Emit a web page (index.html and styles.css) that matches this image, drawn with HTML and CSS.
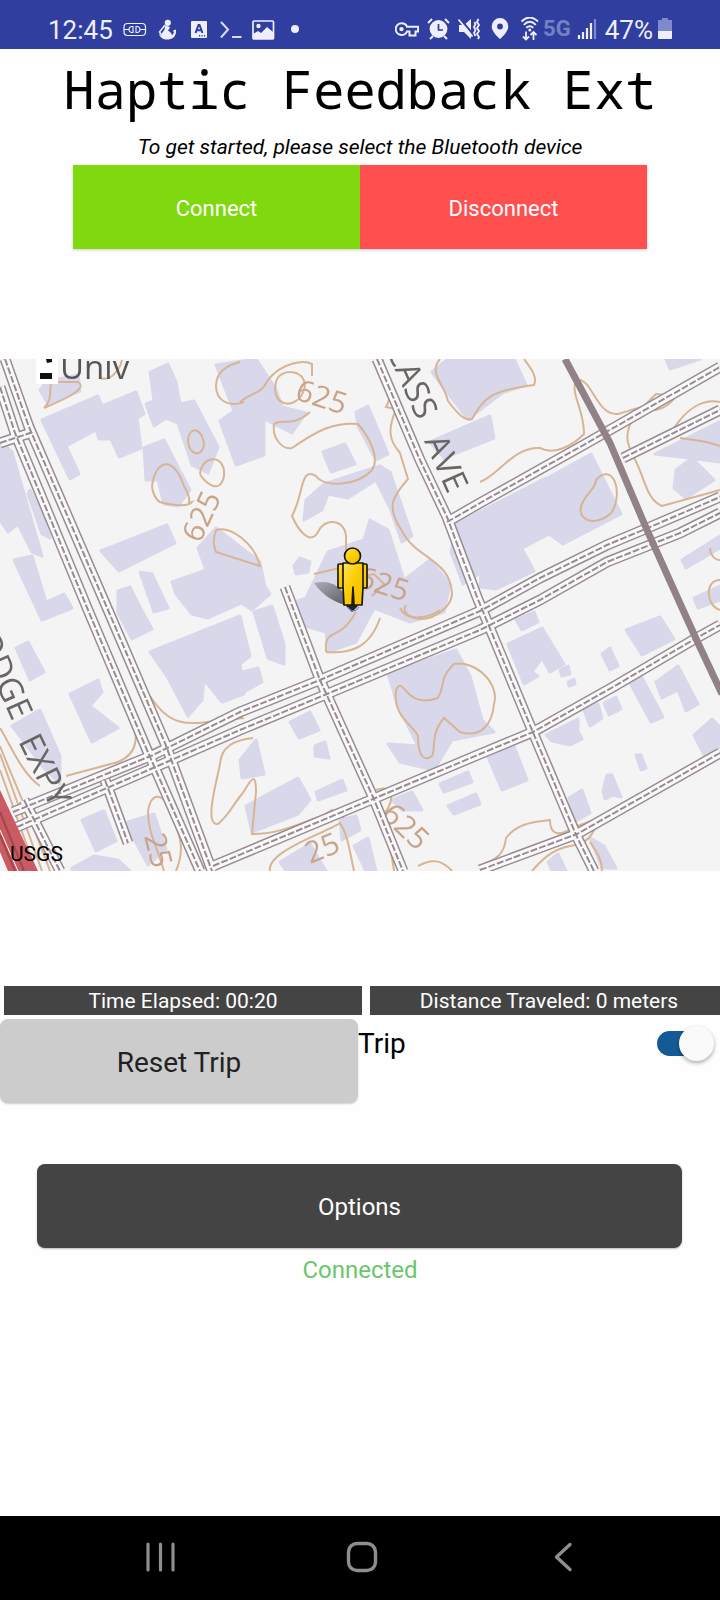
FILE: index.html
```html
<!DOCTYPE html>
<html lang="en">
<head>
<meta charset="utf-8">
<meta name="viewport" content="width=device-width, initial-scale=1">
<title>Haptic Feedback Ext</title>
<link rel="stylesheet" href="styles.css">
</head>
<body>
<div class="screen">
  <header class="status">
    <div class="status-left">
      <span class="clock time">12:45</span>
      <svg class="ico" viewBox="0 0 24 24"><rect x="1" y="6.500" width="21.500" height="12" rx="3.500" fill="none" stroke="#eef" stroke-width="1.200"/><path d="M1 12.500h5M17 12.500h5M10 9.500H8.500Q6 10 6 12.500T8.500 15.500H10ZM13 9.500h1.500Q17 10 17 12.500T14.500 15.500H13Z" fill="none" stroke="#eef" stroke-width="1.100"/></svg>
      <svg class="ico" viewBox="0 0 24 24"><circle cx="12.800" cy="5.800" r="3.100" fill="#eef"/><path d="M10 8 4.500 15l3 4" fill="none" stroke="#eef" stroke-width="1.500"/><path d="M10 8.500c2 .5 4 1 5 2l-2 3c2 1 4 3 4 5l2-3-1-2 3-1v3c-1 5-4 7-9 7-4 0-7-2-8-6l3 3c-1-2 0-4 2-6 1-2 1-3 1-5Z" fill="#eef"/></svg>
      <svg class="ico" viewBox="0 0 24 24"><rect x="4" y="4" width="16" height="17" rx="1" fill="#eef"/><path d="m8.500 16 3-8h1l3 8M9.700 13.200h4.600" fill="none" stroke="#303f9f" stroke-width="2"/><path d="M12 18.800h1.200m1.300 0h1.200m1.300 0h1.200" stroke="#303f9f" stroke-width="1.400"/></svg>
      <svg class="ico" viewBox="0 0 24 24"><path d="m2 5 7 7.500L2 20.500" fill="none" stroke="#d9dcf0" stroke-width="2"/><path d="M13 20h9.500" stroke="#d9dcf0" stroke-width="2"/></svg>
      <svg class="ico" viewBox="0 0 24 24"><rect x="2" y="4" width="20.500" height="18" rx="1" fill="none" stroke="#eef" stroke-width="1.700"/><circle cx="7.500" cy="9" r="2.200" fill="#eef"/><path d="M2 17l5-3 3 2 6-6 6 5v7H2Z" fill="#eef"/></svg>
      <svg class="ico" viewBox="0 0 24 24"><circle cx="12" cy="12" r="4" fill="#eef"/></svg>
    </div>
    <div class="status-right">
      <div class="status-set">
        <svg class="ico" viewBox="0 0 24 24"><path d="M6.500 6.200a5.900 5.900 0 1 0 5.600 8.200h2.400v4.200h6v-4.200h2.600V9.800H12.100A5.900 5.900 0 0 0 6.500 6.200Z" fill="none" stroke="#eef" stroke-width="2"/><circle cx="6.500" cy="12.100" r="2.200" fill="#eef"/></svg>
        <svg class="ico" viewBox="0 0 24 24"><circle cx="12.500" cy="12" r="7.900" fill="#eef" stroke="#eef" stroke-width="2"/><path d="M12.500 7v6h4.500" fill="none" stroke="#303f9f" stroke-width="1.700"/><path d="m2 6 4-4M23 6l-4-4M7 19l-3 3M18 19l3 3" stroke="#eef" stroke-width="2"/></svg>
        <svg class="ico" viewBox="0 0 24 24"><path d="M2 8h5l7-6v20l-7-7H2Z" fill="#eef"/><path d="m3 1.500 13 16" stroke="#303f9f" stroke-width="2"/><path d="m1.500 2.500 14 17" stroke="#eef" stroke-width="1.800"/><path d="m17.500 5 1 2-1.500 3 1.500 3-1.500 3 1.500 3M21.500 2 20 5l2 3-2 3 2 3-2 3 2 3-1 2" fill="none" stroke="#eef" stroke-width="1.800"/></svg>
        <svg class="ico" viewBox="0 0 24 24"><path fill-rule="evenodd" d="M12 1a8.300 8.300 0 0 0-8.300 8.400C3.700 15 12 22 12 22s8.300-7 8.300-12.600A8.300 8.300 0 0 0 12 1Zm0 5.600a2.900 2.900 0 1 1 0 5.800 2.900 2.900 0 0 1 0-5.800Z" fill="#eef"/></svg>
        <svg class="ico" viewBox="0 0 24 24"><path d="M2.500 4.500Q10.500-3.500 19 4.500M4.800 7.800q6-6 12 0M7.300 10.800q3.500-3.300 7 0" fill="none" stroke="#eef" stroke-width="1.900"/><circle cx="10.800" cy="13" r="1.500" fill="#eef"/><path d="M7 14.500v8M4 19.500l3 3 3-3M14.500 23v-8M11.500 18l3-3 3 3" fill="none" stroke="#eef" stroke-width="1.800"/></svg>
      </div>
      <span class="net">5G</span>
      <svg class="ico" viewBox="0 0 24 24"><path d="M3 22v-4M7 22v-7M11 22V11M15 22V6" stroke="#eef" stroke-width="2.200"/><path d="M19 22V2" stroke="#8089cb" stroke-width="2.200"/></svg>
      <span class="clock">47%</span>
      <svg class="battery" viewBox="0 0 14 24"><path d="M4 1h6v2h4v11H0V3h4Z" fill="#8089cb"/><path d="M0 14h14v7q0 1-1 1H1q-1 0-1-1Z" fill="#eef"/></svg>
    </div>
  </header>

  <main class="content">
    <h1 class="title">Haptic Feedback Ext</h1>
    <p class="hint">To get started, please select the Bluetooth device</p>
    <div class="pair">
      <button class="btn connect" type="button">Connect</button>
      <button class="btn disconnect" type="button">Disconnect</button>
    </div>

    <div class="map">
      <svg class="map-art" viewBox="0 359 720 512" preserveAspectRatio="xMidYMid slice" role="img" aria-label="Map with your position">
        <defs>
          <linearGradient id="gold" x1="0" y1="0" x2="1" y2="1"><stop offset="0" stop-color="#ffe45c"/><stop offset=".5" stop-color="#fccb00"/><stop offset="1" stop-color="#f2bd00"/></linearGradient>
          <linearGradient id="shade" x1="0" y1="0" x2="1" y2="1"><stop offset="0" stop-color="#444" stop-opacity=".3"/><stop offset="1" stop-color="#333" stop-opacity=".85"/></linearGradient>
        </defs>
        <rect y="359" width="720" height="512" fill="#f5f4f5"/>
        <g class="soft">
          <g class="buildings">
            <path d="M42 420 98 396l4 10 34-14 8 22-7 4 4 30-22 9-8-18-12 0-3-9-30 16 13 28-9 5Z"/>
            <path d="M40 390l6-8 32-7 2 16-32 13Z"/>
            <path d="M150 372l18-8 8 18 4 22 14-3 24 46-10 26-16-8-14-42-12-5-12 8-8-22 8-3Z"/>
            <path d="M144 448l20-8 26 50-12 16-14-2-6-24-12 0Z"/>
            <path d="M216 365l40-6 20 30 6 18 24 6-14 20-28-14 0 36-28 10-16-44 14-10Z"/>
            <path d="M0 440 12 452 42 556 32 552 18 524 8 532 0 520Z"/>
            <path d="M30 490l14 30 6 18-8-4-14-40Z"/>
            <path d="M101 551 167 525l8 18-56 28Z"/>
            <path d="M14 560l18-4 14 46 18-8 8 14-30 12Z"/>
            <path d="M118 591l12-4 10 20 12 22-20 10-14-26Z"/>
            <path d="M140 572l12 2 16 34-14 4Z"/>
            <path d="M172 582 206 570l-8-22 18-20 44 34 6 30-58 26-16-4-16-20Z"/>
            <path d="M150 652 240 616l10 40-10 8 4 30-22 8-18-22-2 20-14 16-20-38Z"/>
            <path d="M16 648l12-6 16 30-14 8Z"/>
            <path d="M70 694l28-14 4 12-12 14 28 22-26 14Z"/>
            <path d="M12 726l28-16 20 46 0 28-16-16Z"/>
            <path d="M82 820l22-9 12 30-20 10Z"/>
            <path d="M72 868l22-12 24 4 12 11H72Z"/>
            <path d="M128 822l26-8 12 35-18 16-14-26Z"/>
            <path d="M356 412l12-6 20 48-12 6-18-34Z"/>
            <path d="M323 452l22-8 10 20-24 8Z"/>
            <path d="M306 500l18-16 56-18 10 6 22 64-10 6-12-34-14-28-28 18-20-4-6 16-18 10Z"/>
            <path d="M328 552l36-12 6-20 18 10 16 50 26-20 20 24-6 28-34 10-36-14-18 34-28 10-2-20-28-8-8-20 16-6Z"/>
            <path d="M294 566l6-8 10 4-2 10-12 2Z"/>
            <path d="M240 590l18-14 12 18-18 16-12-8Z"/>
            <path d="M254 612l18-6 12 38 0 20-16-6Z"/>
            <path d="M242 672l16-4 4 14-22 12Z"/>
            <path d="M432 372 448 359h66l12 26-24 8-34 26-28-36Z"/>
            <path d="M430 442l60-26 4 22-50 20Z"/>
            <path d="M456 524l88-45 9-3 12 32-14-32 40-22 30 60-58 30-14-10-38 20-48 30-12-32Z"/>
            <path d="M482 559l38-14 14 26-38 18-16-2Z"/>
            <path d="M666 359h34l-30 10ZM655 454l64-32v40l-30-4ZM676 470l16-12 22 22-28 18-12-10Z"/>
            <path d="M682 560l38-24v12l-34 20ZM694 598l26-12v14l-22 8Z"/>
            <path d="M388 674l68-24 14 26 12 44 12 12-42 8-18 30-34-8-12-18 30 2-20-40Z"/>
            <path d="M508 644l34-16 22 36-14 8-8-14-10 14 6 4-14 8Z"/>
            <path d="M516 620l18-8 4 10-16 8Z"/>
            <path d="M626 630l34-13 14 22-32 16Z"/>
            <path d="M602 654l8-6 8 18-8 4ZM560 670l8-4 2 8-8 2ZM568 682l6-3 1 5-6 2Z"/>
            <path d="M629 681l12-5 22 41-12 5ZM656 682l22-16 20 38-12 7-8-21-16 8Z"/>
            <path d="M546 735l32-16 0 12 4 8-12 6-18-4ZM584 710l14-6 4 14-12 8ZM604 703l12-6 5 12-12 6Z"/>
            <path d="M488 757l26-11 13 34-25 10ZM569 798l13-8 8 23-14 8ZM636 755l5 0 5 13-5 2ZM607 775l5 0 9 22-8-2-8 4-2-8Z"/>
            <path d="M694 735l18-16 8 8v20l-16 8Z"/>
            <path d="M290 722l20-10 9 18-20 8ZM315 746l10-4 4 16-14-2ZM316 792l26-12 4 10-28 10Z"/>
            <path d="M240 760l16-20 8 34-22 4Z"/>
            <path d="M246 806l52-28 12 22-12 14-46 18Z"/>
            <path d="M340 820l16-4 4 14-18 10ZM354 846l14-8 8 33h-10ZM280 862l30-18 16 27h-40Z"/>
            <path d="M440 784l28-12 4 10-28 10ZM448 806l28-12 4 10-26 10ZM392 800l20-8 10 18-20 0Z"/>
            <path d="M548 862l10-8 8 17h-14ZM590 838l14 8 12 22h-14Z"/>
          </g>
          <g class="contours">
            <path d="M44 408c10-10 4-20 8-26l26 0c10 6-10 16-34 26M100 378c10 4 20-8 22-18"/>
            <path d="M240 402c14-12 20-6 28-22 14-18 36-20 44-16l0 12M240 362c-16 4-24 12-24 24 0 14 12 22 28 16"/>
            <path d="M276 382c-6 24 20 30 28 8 6-20-24-24-28-8"/>
            <path d="M310 412c-18 16-28 6-36 12-2 14 8 26 18 24 26-18 42-26 66-24 12 14 22 34 14 46-14 16-48 18-56 6-16-10-12 18-24 40 6 14 18 30 26 16 6-14 26-14 28 4v14"/>
            <path d="M382 359c6 16 14 30 4 48l10 2c-8 20-8 30 4 44l8 26c-16 18-22 28-6 52 14 28 48 28 50 62 0 10-8 18-20 24-18 6-32-4-26-12"/>
            <path d="M440 359c-12 14 4 24 8 42 12 16 18 20 24 18 12-20 16-28 62-34 4-8-4-18-10-26"/>
            <path d="M480 482c18-6 34-36 60-34 16 8 34-4 44-14 0-26-14-40-8-54 16-4 20 36 42 34 16-4 24-10 38-4 10-2 16-8 20-14l-20-2-20 20"/>
            <path d="M720 402c-18-4-34 8-46 26M632 420c-10 20-2 28 6 46 8 18 10 34 24 40l58-16M680 438c14 2 24 2 40 8"/>
            <path d="M584 500c-12 18 10 30 28 12 12-22 0-50-16-32 0 8-8 12-12 20"/>
            <path d="M152 486c4-28 22-30 32 0 12 20-2 20 8 16-4 6-26 2-32 0-4-2-8-10-8-16M188 442c0-18 16-14 16 4-4 12-14 8-16-4"/>
            <path d="M200 474c2-20 26-20 24 2-4 20-20 6-24-2"/>
            <path d="M216 530c-4 12-2 16 0 22l44 14c-6-24-30-40-44-36"/>
            <path d="M326 652c-2-26 12-8 30-40M326 652c24 2 44-4 54-34M400 608c8 16 32 8 40 2M314 574l26-6 4 12 30-6 10 10-12 12"/>
            <path d="M396 690c8-16 8 20 42 8 8-14 0-18 16-34 22-4 46 20 40 40-2 22-14 34-34 28l-16-14c-14 16-8 32-12 38-8 6-14 0-14-20-4-10-26-20-22-46"/>
            <path d="M132 712c4 20 10 40-14 50l-52 14M150 696c24 38 44 26 94 22M253 738c-18 2-32 8-33 26-4 20-16 62-2 60 12-10 14-18 24-30 6-8 14-28 14-2l-4 42c30 0 50-12 70-18l10-6 12 8"/>
            <path d="M148 812c2-20 16-22 24 4 10 22 12 36 4 55M148 812c0 20 8 32 16 59M270 871c-4-20 60-40 70-48 8 12 10 30 14 48"/>
            <path d="M376 790c20-8 20 16 2 30 8 16 14 30 16 51M418 866c14-8 24-6 34 5M480 866c12-6 24-8 26-28 12-16 30-16 44-18 0 16 10 16 22 8l28-10c-8 18-12 26-30 28-20 4-30 16-38 25M590 842c8 12 12 18 12 29"/>
            <path d="M720 560c-6 0-10-6-10-12M720 610c-14-4-16-30 0-30"/>
            <path d="M0 728c10 16 22 46 40 58M0 746c10 26 30 70 50 125M0 754l42 117M0 770l36 101"/>
          </g>
          <text class="elev" transform="translate(294 399) rotate(18)">625</text>
          <text class="elev" transform="translate(200 544) rotate(-65)">625</text>
          <text class="elev" transform="translate(356 586) rotate(18)">625</text>
          <text class="elev" transform="translate(380 816) rotate(44)">625</text>
          <text class="elev" transform="translate(144 836) rotate(76)">25</text>
          <text class="elev" transform="translate(310 864) rotate(-22)">25</text>
          <g class="rail-edge"><use href="#roads"/></g>
          <g class="rail-fill"><use href="#roads"/></g>
          <g class="rail-mid">
            <g id="roads">
              <path d="M0 387 15 433 88 610 147 750 200 871"/>
              <path d="M5 359 29 427 108 610 165 743 212 871"/>
              <path d="M0 443 33 432"/>
              <path d="M13 812 153 755 240 712 320 680 480 611 540 578 607 545 650 527 720 497"/>
              <path d="M17 827 160 765 240 730 327 694 480 630 540 600 607 562 680 533 720 513"/>
              <path d="M377 359 420 460 447 517 477 597 532 730 577 837 594 871"/>
              <path d="M285 587 320 680 373 797 403 871"/>
              <path d="M447 522 480 503 580 447 720 367"/>
              <path d="M623 458 720 410"/>
              <path d="M213 866 373 799 480 754 533 732 613 687 693 640 720 625"/>
              <path d="M480 870 577 834 720 753"/>
              <path d="M105 780 128 843M24 800 60 871"/>
            </g>
          </g>
          <path d="M565 359 610 443 647 530 683 610 698 643 722 694" fill="none" stroke="#908285" stroke-width="7"/>
          <path d="M0 790 38 871H8L0 852Z" fill="#c95b62"/>
          <path d="M0 812 24 871M0 835 15 871" stroke="#a8444d" stroke-width="2"/>
          <path d="M0 830 18 871" stroke="#fff" stroke-width="1"/>
          <rect x="36" y="359" width="22" height="25" fill="#fff"/>
          <path d="M40 373h12v6H40ZM46 359h6v3l-5 1Z" fill="#111"/>
          <text class="place" x="60" y="379">Univ</text>
          <text class="street" transform="translate(386 350) rotate(66)">CASS</text>
          <text class="street" transform="translate(424 441) rotate(66)">AVE</text>
          <text class="street" transform="translate(-32 622) rotate(66)">LODGE</text>
          <text class="street" transform="translate(18 741) rotate(64)">EXPY</text>
        </g>
        <path d="M314 583q18-4 28 8l12 16q-26-4-40-24Z" fill="url(#shade)"/>
        <path d="m346 606 6-3 6 3-6 6Z" fill="#222"/><path d="M348 607q6 8 11 0" fill="none" stroke="#6a67c8"/>
        <g fill="url(#gold)" stroke="#1c1800" stroke-width="1.700" stroke-linejoin="round">
          <rect x="338" y="564" width="6" height="24" rx="1"/><rect x="361" y="564" width="6" height="24" rx="1"/>
          <path d="M343 563h20v24l-1 18h-8l-1-18-1 18h-8l-1-18Z"/>
          <circle cx="352.500" cy="556" r="8"/>
        </g>
      </svg>
      <span class="credit">USGS</span>
    </div>

    <div class="stats">
      <div class="stat">Time Elapsed: 00:20</div>
      <div class="stat">Distance Traveled: 0 meters</div>
    </div>
    <div class="trip">
      <button class="btn reset" type="button">Reset Trip</button>
      <label class="toggle"><span>Trip</span><input class="switch" type="checkbox" role="switch" checked></label>
    </div>
    <button class="btn options" type="button">Options</button>
    <p class="state">Connected</p>
  </main>

  <nav class="nav">
    <button class="nav-btn" type="button" aria-label="Recent apps"><svg class="nav-ico" viewBox="0 0 32 32"><path d="M4 3v26M16.500 3v26M29 3v26" stroke="#8e8e8e" stroke-width="3.200" stroke-linecap="round"/></svg></button>
    <button class="nav-btn" type="button" aria-label="Home"><svg class="nav-ico" viewBox="0 0 32 32"><rect x="2.500" y="2.500" width="27" height="27" rx="8.500" fill="none" stroke="#8e8e8e" stroke-width="3.400"/></svg></button>
    <button class="nav-btn" type="button" aria-label="Back"><svg class="nav-ico" viewBox="0 0 32 32"><path d="M23 3.500 9.500 16 23 28.500" fill="none" stroke="#8e8e8e" stroke-width="3.400" stroke-linecap="round" stroke-linejoin="round"/></svg></button>
  </nav>
</div>
</body>
</html>
```
FILE: styles.css
```css
* { box-sizing: border-box; }
body { margin: 0; background: #fefefe; color: #000; font-family: Roboto, sans-serif; }
h1, p { margin: 0; font-weight: 400; }

.screen { display: flex; flex-direction: column; min-height: 100vh; overflow-x: hidden; }

.status { display: flex; justify-content: space-between; padding: 9px 48px 0; height: 49px; background: #303f9f; color: #eef; }
.status-left, .status-right, .status-set { display: flex; align-items: center; height: 40px; }
.status-left { gap: 8px; }
.status-right { gap: 5px; }
.status-set { gap: 7px; margin-right: -5px; }
.ico { display: block; width: 24px; height: 24px; }
.battery { display: block; width: 14px; height: 24px; }
.clock { padding-top: 2px; font-size: 26px; line-height: 40px; }
.time { margin-right: 2px; }
.net { font-size: 22px; font-weight: 700; line-height: 40px; color: #7680c4; }

.content { display: flex; flex-direction: column; }
.title { padding-top: 6px; font-family: "Noto Sans Mono", "Droid Sans Mono", "DejaVu Sans Mono", monospace; font-size: 52px; line-height: 68px; text-align: center; white-space: nowrap; }
.hint { padding: 8px 0 2px; font-size: 21px; font-style: italic; line-height: 32px; text-align: center; }

.btn { height: 84px; padding: 2px 0 0; border: 0; font-family: inherit; font-size: 24px; color: #fff; }
.pair { display: grid; grid-template-columns: 1fr 1fr; margin: 0 73px; box-shadow: 0 1px 3px #0003; }
.pair .btn { font-size: 22px; }
.connect { background: #80d80f; }
.disconnect { background: #ff4f4f; }

.map { position: relative; margin: 110px 0 115px; }
.map-art { display: block; width: 100%; height: auto; }
.credit { position: absolute; left: 10px; bottom: 4px; font-size: 21px; line-height: 26px; }
.soft { filter: blur(0.7px); }
.buildings { fill: #d8d8ea; stroke: #d8d8ea; stroke-width: 3; stroke-linejoin: round; }
.contours { fill: none; stroke: #d6b595; stroke-width: 2; }
.elev { fill: #c8a48a; font-family: "Open Sans", sans-serif; font-size: 30px; }
.rail-edge { fill: none; stroke: #988c92; stroke-width: 11; }
.rail-fill { fill: none; stroke: #fbfafb; stroke-width: 8; }
.rail-mid { fill: none; stroke: #988c92; stroke-width: 2; stroke-dasharray: 7 2; }
.place { fill: #555; font-family: "Open Sans", sans-serif; font-size: 33px; }
.street { fill: #6b6563; font-family: "Open Sans", sans-serif; font-size: 33px; }

.stats { display: grid; grid-template-columns: 1fr 1fr; gap: 8px; margin: 0 -8px 4px 4px; }
.stat { padding-top: 2px; background: #444; color: #fff; font-size: 21px; line-height: 27px; text-align: center; white-space: nowrap; }

.trip { display: grid; grid-template-columns: 358px 1fr; align-items: start; }
.reset { border-radius: 8px; background: #ccc; color: #222; font-size: 28px; box-shadow: 0 1px 2px #0003; }
.toggle { display: flex; align-items: center; justify-content: space-between; height: 48px; padding-right: 6px; font-size: 28px; }
.switch { position: relative; appearance: none; width: 57px; height: 25px; margin: 0; border-radius: 13px; background: linear-gradient(90deg, #145a96 44px, transparent 44px); }
.switch::before { content: ""; position: absolute; right: 0; top: -5px; width: 35px; height: 35px; border-radius: 50%; background: #fafafa; box-shadow: 0 2px 4px #0005; }

.options { margin: 61px 38px 0 37px; border-radius: 8px; background: #444; box-shadow: 0 1px 2px #0004; }
.state { padding-top: 7px; color: #6cc66c; font-size: 24px; line-height: 30px; text-align: center; }

.nav { display: flex; justify-content: space-between; align-items: center; height: 84px; margin-top: auto; padding: 0 141px 2px 144px; background: #000; }
.nav-btn { padding: 0; border: 0; background: none; }
.nav-ico { display: block; width: 32px; height: 32px; }
```
